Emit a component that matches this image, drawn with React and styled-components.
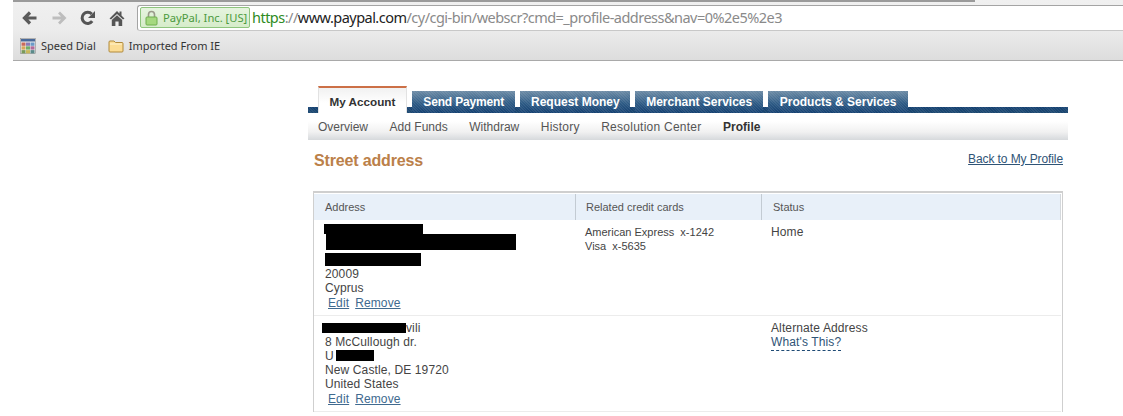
import React from "react";
import styled, { createGlobalStyle } from "styled-components";

const Global = createGlobalStyle`
  html, body { margin: 0; padding: 0; background: #fff; height: 416px; overflow: hidden; }
  body { font-family: "Liberation Sans", Arial, sans-serif; font-size: 12px; color: #444; }
  a { text-decoration: none; }
`;

const Chrome = styled.header`
  margin-left: 13px;
  height: 61px;
  box-sizing: border-box;
  border-bottom: 1px solid #a9a9a9;
  background: linear-gradient(#f0f0f0, #ececec 50%, #dddddd);
  display: flex;
  flex-direction: column;
  position: relative;
  font-family: "Noto Sans", "Open Sans", sans-serif;
`;
const TabEdge = styled.div`
  position: absolute;
  top: 0;
  left: 0;
  width: 962px;
  height: 2px;
  background: #9a9a9a;
`;
const Toolbar = styled.div`
  height: 31px;
  padding: 5px 0 0 7px;
  box-sizing: border-box;
  display: flex;
  align-items: flex-start;
`;
const NavIcons = styled.div`
  width: 117px;
  height: 26px;
  display: flex;
  align-items: center;
  gap: 9px;
`;
const NavSvg = styled.svg`
  width: 20px;
  height: 20px;
  flex: none;
  display: block;
`;
const Omnibox = styled.div`
  flex: 1;
  height: 26px;
  box-sizing: border-box;
  background: #fff;
  border: 1px solid #a4a4a4;
  border-right: 0;
  border-bottom-color: #c8c8c8;
  border-radius: 3px 0 0 3px;
  padding: 1px 0 0 2px;
  display: flex;
  align-items: flex-start;
`;
const Badge = styled.div`
  width: 110px;
  height: 21px;
  box-sizing: border-box;
  border: 1px solid #8ec57e;
  border-radius: 2px;
  background: linear-gradient(#e6f4df, #d6ecca);
  color: #4b9a40;
  display: flex;
  align-items: center;
  padding-left: 4px;
  gap: 5px;
  font-size: 11.2px;
  white-space: nowrap;
`;
const LockSvg = styled.svg`
  width: 13px;
  height: 16px;
  flex: none;
`;
const Url = styled.div`
  margin-left: 2px;
  font-size: 14.5px;
  line-height: 21px;
  white-space: nowrap;
  color: #8a8a8a;
  letter-spacing: -0.52px;
`;
const Scheme = styled.span`
  color: #2e8b22;
`;
const Slash = styled.span`
  color: #8a8a8a;
`;
const Host = styled.span`
  color: #222;
`;
const Bookmarks = styled.nav`
  height: 29px;
  display: flex;
  align-items: center;
  padding-left: 7px;
  font-size: 11px;
  color: #333;
`;
const Bookmark = styled.div`
  display: flex;
  align-items: center;
  gap: 5px;
  margin-right: 12px;
  white-space: nowrap;
`;
const BookmarkSvg = styled.svg`
  width: 16px;
  height: 16px;
  flex: none;
`;

const Site = styled.main`
  margin-left: 308px;
  width: 760px;
  padding-top: 25px;
`;
const TabRow = styled.div`
  height: 27px;
  padding-left: 10px;
  display: flex;
  align-items: flex-end;
  gap: 5px;
  background:
    repeating-linear-gradient(45deg, rgba(255,255,255,.07) 0 1px, transparent 1px 2px) bottom / 100% 6px no-repeat,
    linear-gradient(#164272, #1c4870) bottom / 100% 6px no-repeat;
`;
const Tab = styled.a`
  height: 22px;
  box-sizing: border-box;
  padding: 0 ${p => p.$pad || 11.5}px;
  display: flex;
  align-items: center;
  color: #fff;
  font-weight: 700;
  font-size: 12px;
  letter-spacing: ${p => p.$track || 0}px;
  white-space: nowrap;
  background:
    repeating-linear-gradient(45deg, rgba(255,255,255,.08) 0 1px, transparent 1px 2px),
    linear-gradient(#6e8ca6, #2f5c86 55%, #164272);
`;
const ActiveTab = styled.a`
  height: 27px;
  box-sizing: border-box;
  padding: 2px 10.5px 0;
  display: flex;
  align-items: center;
  color: #333;
  font-weight: 700;
  font-size: 11.7px;
  white-space: nowrap;
  border-top: 2px solid #cc7047;
  border-left: 1px solid #e2e2e2;
  border-right: 1px solid #e2e2e2;
  background: linear-gradient(#f1f1f1, #ffffff 60%);
`;
const SubNav = styled.div`
  height: 27px;
  box-sizing: border-box;
  padding: 0 0 0 10px;
  display: flex;
  align-items: center;
  gap: 21.6px;
  background: linear-gradient(#ffffff 30%, #f1f1f1 70%, #d6d9dc);
`;
const SubLink = styled.a`
  font-size: 12px;
  color: ${p => (p.$current ? "#333" : "#555")};
  font-weight: ${p => (p.$current ? 700 : 400)};
  letter-spacing: ${p => p.$track || 0}px;
`;
const Heading = styled.div`
  height: 51px;
  padding: 12px 5px 0 6px;
  box-sizing: border-box;
  display: flex;
  justify-content: space-between;
  align-items: flex-start;
`;
const Title = styled.h1`
  margin: 0;
  font-size: 16px;
  line-height: 18px;
  font-weight: 700;
  letter-spacing: -0.15px;
  color: #bb8049;
`;
const BackLink = styled.a`
  color: #2f5476;
  text-decoration: underline;
  line-height: 14px;
  letter-spacing: -0.1px;
`;
const Panel = styled.section`
  margin-left: 5px;
  width: 750px;
  box-sizing: border-box;
  border: 1px solid #cfcfcf;
  border-bottom: 0;
  border-top-width: 2px;
  padding: 1px 1px 0 0;
`;
const Grid = styled.div`
  display: grid;
  grid-template-columns: 262px 186px 1fr;
`;
const HeadRow = styled(Grid)`
  height: 26px;
  background: #e8f0f9;
  align-items: stretch;
`;
const HeadCell = styled.div`
  font-size: 11px;
  color: #555;
  padding: 0 10px 0 ${p => p.$pad || 11}px;
  display: flex;
  align-items: center;
  border-right: ${p => (p.$last ? "1px solid #d4d8dc" : "1px solid #c3cbd3")};
`;
const Row = styled(Grid)`
  height: 96px;
  box-sizing: border-box;
  border-bottom: 1px solid #ececec;
`;
const Cell = styled.div`
  padding: 5px 0 0 11px;
  line-height: 14px;
  font-size: 12px;
  color: #444;
  letter-spacing: 0.12px;
`;
const CardCell = styled(Cell)`
  font-size: 11px;
  padding-left: 9px;
  letter-spacing: 0;
`;
const StatusCell = styled(Cell)`
  padding-left: 9px;
`;
const Line = styled.div`
  height: 14px;
  white-space: nowrap;
`;
const CardLine = styled(Line)`
  white-space: pre;
`;
const Redact = styled.div`
  background: #000;
  width: ${p => p.$w}px;
  height: ${p => p.$h}px;
  margin: ${p => p.$mt || 0}px 0 ${p => p.$mb || 0}px ${p => p.$ml || 0}px;
`;
const RedactInline = styled.span`
  display: inline-block;
  background: #000;
  width: ${p => p.$w}px;
  height: ${p => p.$h}px;
  margin-left: ${p => p.$ml}px;
  vertical-align: ${p => p.$va}px;
`;
const Actions = styled.div`
  padding-left: 3px;
  line-height: 16px;
  display: flex;
  gap: 6px;
`;
const ActionLink = styled.a`
  color: #406a8f;
  text-decoration: underline;
`;
const Help = styled.a`
  display: inline-block;
  color: #2f5476;
  line-height: 14px;
  padding-bottom: 1px;
  border-bottom: 1px dashed #1e4a75;
`;

const Back = () => (
  <NavSvg viewBox="0 0 20 20">
    <path d="M16.5 10H5M10 4.5 4.5 10l5.5 5.5" fill="none" stroke="#5a5a5a" strokeWidth="3.2" />
  </NavSvg>
);
const Forward = () => (
  <NavSvg viewBox="0 0 20 20">
    <path d="M3.5 10H15M10 4.5l5.5 5.5-5.5 5.5" fill="none" stroke="#bdbdbd" strokeWidth="2.8" />
  </NavSvg>
);
const Reload = () => (
  <NavSvg viewBox="0 0 20 20">
    <path d="M14.2 13.2A5.6 5.6 0 1 1 13.8 6" fill="none" stroke="#555" strokeWidth="3" />
    <path d="M17 3v7h-7z" fill="#555" />
  </NavSvg>
);
const Home = () => (
  <NavSvg viewBox="0 0 20 20">
    <path d="M10 3 2.5 10.5 4 11.5 10 6l6 5.5 1.5-1L14.5 7.6V3.5H12.5V5.5z" fill="#555" />
    <path d="M4.8 12 10 7.2l5.2 4.8V18h-3.6v-4.5H8.4V18H4.8z" fill="#555" />
  </NavSvg>
);
const Lock = () => (
  <LockSvg viewBox="0 0 13 16">
    <path d="M3.5 7V4.5a3 3 0 0 1 6 0V7" fill="none" stroke="#9a9a8a" strokeWidth="1.6" />
    <rect x="1" y="7" width="11" height="8" rx="1" fill="#a5d97f" stroke="#6fae4e" />
  </LockSvg>
);
const SpeedDial = () => (
  <BookmarkSvg viewBox="0 0 16 16">
    <rect x="0.5" y="0.5" width="15" height="15" fill="#eee" stroke="#8a8a8a" strokeWidth="0.6" />
    <rect x="1" y="1" width="14" height="2.5" fill="#4a6a9a" />
    {[
      ["#c96a5a", "#8a7ab5", "#6a9ac8"],
      ["#d8a85a", "#6fae6a", "#b06a9a"],
      ["#7a9a5a", "#c8b85a", "#5a8a8a"],
    ].map((r, y) =>
      r.map((c, x) => <rect key={`${x}${y}`} x={1.5 + x * 4.5} y={4.5 + y * 3.8} width="4" height="3.3" fill={c} />)
    )}
  </BookmarkSvg>
);
const Folder = () => (
  <BookmarkSvg viewBox="0 0 16 16">
    <path d="M1 4a1 1 0 0 1 1-1h4l1.5 1.5H14a1 1 0 0 1 1 1V13a1 1 0 0 1-1 1H2a1 1 0 0 1-1-1z" fill="#fbdc94" stroke="#b08a3c" />
    <path d="M2 6h12" stroke="#fff3cf" />
  </BookmarkSvg>
);

export default function App() {
  return (
    <>
      <Global />
      <Chrome>
        <TabEdge />
        <Toolbar>
          <NavIcons>
            <Back />
            <Forward />
            <Reload />
            <Home />
          </NavIcons>
          <Omnibox>
            <Badge>
              <Lock />
              PayPal, Inc. [US]
            </Badge>
            <Url>
              <Scheme>https</Scheme>
              <Slash>://</Slash>
              <Host>www.paypal.com</Host>/cy/cgi-bin/webscr?cmd=_profile-address&amp;nav=0%2e5%2e3
            </Url>
          </Omnibox>
        </Toolbar>
        <Bookmarks>
          <Bookmark>
            <SpeedDial />
            Speed Dial
          </Bookmark>
          <Bookmark>
            <Folder />
            Imported From IE
          </Bookmark>
        </Bookmarks>
      </Chrome>
      <Site>
        <TabRow>
          <ActiveTab>My Account</ActiveTab>
          <Tab $track={-0.17} $pad={11.5}>Send Payment</Tab>
          <Tab $pad={10.5}>Request Money</Tab>
          <Tab $pad={11}>Merchant Services</Tab>
          <Tab>Products &amp; Services</Tab>
        </TabRow>
        <SubNav>
          <SubLink>Overview</SubLink>
          <SubLink>Add Funds</SubLink>
          <SubLink>Withdraw</SubLink>
          <SubLink $track={0.2}>History</SubLink>
          <SubLink $track={0.25}>Resolution Center</SubLink>
          <SubLink $current>Profile</SubLink>
        </SubNav>
        <Heading>
          <Title>Street address</Title>
          <BackLink>Back to My Profile</BackLink>
        </Heading>
        <Panel>
          <HeadRow>
            <HeadCell>Address</HeadCell>
            <HeadCell $pad={10}>Related credit cards</HeadCell>
            <HeadCell $last>Status</HeadCell>
          </HeadRow>
          <Row>
            <Cell>
              <Redact $w={99} $h={10} $mt={-1} $ml={-1} />
              <Redact $w={190} $h={16} $ml={1} />
              <Redact $w={96} $h={13} $mt={3} $mb={1} />
              <Line>20009</Line>
              <Line>Cyprus</Line>
              <Actions>
                <ActionLink>Edit</ActionLink>
                <ActionLink>Remove</ActionLink>
              </Actions>
            </Cell>
            <CardCell>
              <CardLine>American Express  x-1242</CardLine>
              <CardLine>Visa  x-5635</CardLine>
            </CardCell>
            <StatusCell>Home</StatusCell>
          </Row>
          <Row>
            <Cell>
              <Line>
                <RedactInline $w={84} $h={10} $ml={-3} $va={-1} />
                vili
              </Line>
              <Line>8 McCullough dr.</Line>
              <Line>
                U
                <RedactInline $w={38} $h={11} $ml={2} $va={-1} />
              </Line>
              <Line>New Castle, DE 19720</Line>
              <Line>United States</Line>
              <Actions>
                <ActionLink>Edit</ActionLink>
                <ActionLink>Remove</ActionLink>
              </Actions>
            </Cell>
            <CardCell />
            <StatusCell>
              <Line>Alternate Address</Line>
              <Help>What's This?</Help>
            </StatusCell>
          </Row>
        </Panel>
      </Site>
    </>
  );
}
